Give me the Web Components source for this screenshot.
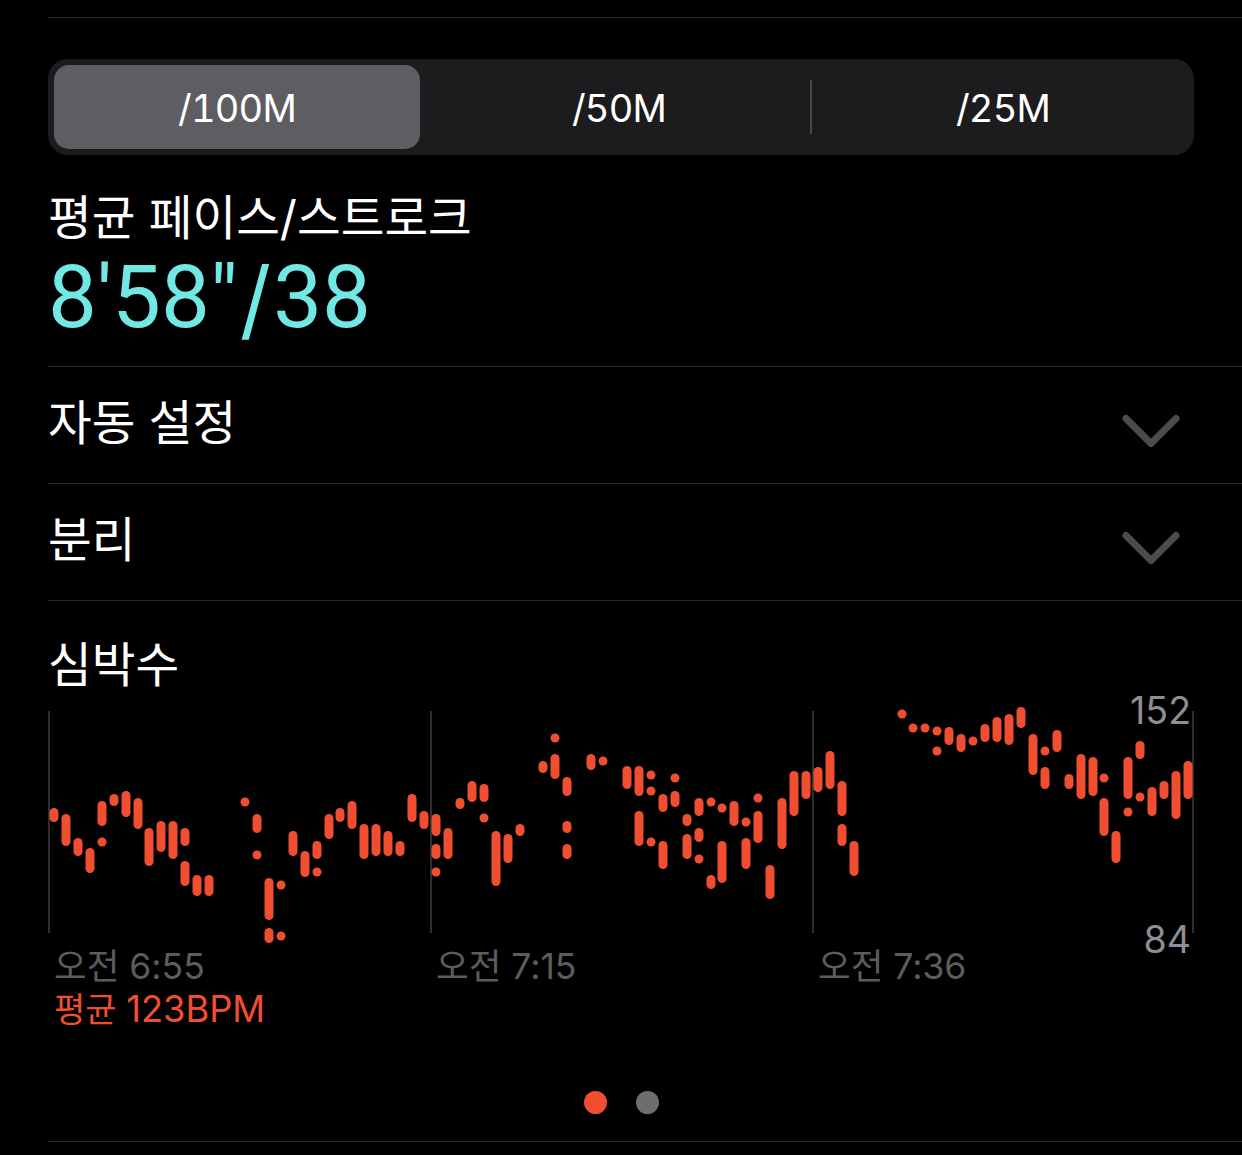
<!DOCTYPE html>
<html lang="ko">
<head>
<meta charset="utf-8">
<title>심박수</title>
<style>
  html, body { margin: 0; background: #000; }
  body { font-family: Inter, "Noto Sans CJK KR", sans-serif; color: #fff; width: 1242px; height: 1155px; overflow: hidden; }
  main { display: flex; flex-direction: column; padding: 17px 0 0 48px; }
</style>
</head>
<body>
<main>
  <seg-control></seg-control>
  <pace-metric label="평균 페이스/스트로크" value="8'58&quot;/38"></pace-metric>
  <fold-row>자동 설정</fold-row>
  <fold-row>분리</fold-row>
  <heart-chart></heart-chart>
  <page-dots></page-dots>
</main>
<script>
const sans = `Inter, "Noto Sans CJK KR", sans-serif`

class SegControl extends HTMLElement {
  constructor() {
    super()
    this.shadow = this.attachShadow({ mode: 'open' })
  }
  connectedCallback() {
    this.shadow.innerHTML = /*html*/`
      <style>
        :host { display: block; border-top: 1px solid #2a2a2c; padding-top: 41px; }
        .track {
          display: grid; grid-template-columns: 366px 8px 382px 2px 1fr;
          align-items: center; box-sizing: border-box;
          width: 1146px; height: 96px; padding: 6px 0 6px 6px;
          background: #1c1c1e; border-radius: 20px;
        }
        .seg {
          display: flex; align-items: center; justify-content: center; height: 84px;
          font: 400 38px ${sans}; font-feature-settings: "tnum"; letter-spacing: -.8px; padding-top: 1px; box-sizing: border-box;
        }
        .seg.on { background: #5e5e62; border-radius: 15px; }
        .sep { height: 54px; background: #48484a; }
      </style>
      <div class="track">
        <div class="seg on">/100M</div>
        <div></div>
        <div class="seg">/50M</div>
        <div class="sep"></div>
        <div class="seg">/25M</div>
      </div>`
  }
}

class PaceMetric extends HTMLElement {
  constructor() {
    super()
    this.shadow = this.attachShadow({ mode: 'open' })
  }
  connectedCallback() {
    const value = this.getAttribute('value').replace('/', '<span>/</span>')
    this.shadow.innerHTML = /*html*/`
      <style>
        :host { display: block; height: 211px; box-sizing: border-box; padding-top: 34px; }
        .label { font: 400 47.5px/58px ${sans}; height: 58px; }
        .value { font: 400 87px/88px Roboto, ${sans}; color: #72e8e4; margin-top: 6px; height: 88px; }
        .value span { font-family: Inter, sans-serif; vertical-align: -3px; margin: 0 2px 0 2px; }
      </style>
      <div class="label">${this.getAttribute('label')}</div>
      <div class="value">${value}</div>`
  }
}

class FoldRow extends HTMLElement {
  constructor() {
    super()
    this.shadow = this.attachShadow({ mode: 'open' })
  }
  connectedCallback() {
    this.shadow.innerHTML = /*html*/`
      <style>
        :host {
          display: flex; justify-content: space-between; box-sizing: border-box;
          height: 117px; border-top: 1px solid #2a2a2c; padding: 26px 62px 0 0;
          font: 400 47.5px/60px ${sans};
        }
        svg { width: 58px; height: 34px; margin-top: 21px; }
      </style>
      <span><slot></slot></span>
      <svg viewBox="0 0 58 34" fill="none" stroke="#4c4c50" stroke-width="7" stroke-linecap="round" stroke-linejoin="round">
        <path d="M4 4.5 L29 29.5 L54 4.5"/>
      </svg>`
  }
}

class HeartChart extends HTMLElement {
  constructor() {
    super()
    this.shadow = this.attachShadow({ mode: 'open' })

    // x: [y1, y2] is a bar, a single y is a dot
    this.data = [
      [54, [808,822]], [66, [814,846]], [78, [838,856]], [90, [848,873]],
      [102, [801,826], 842], [114, [794,806]], [126, [791,817]], [138, [798,829]],
      [149, [828,866]], [161, [821,852]], [173, [821,859]], [185, [828,846], [861,886]],
      [197, [875,896]], [209, [875,896]], [245, 802], [257, [814,833], 855],
      [269, [878,920], [928,943]], [281, 885, 936], [293, [831,856]], [305, [851,877]],
      [317, [841,859], 872], [329, [814,839]], [340, [808,822]], [352, [801,829]],
      [364, [824,859]], [376, [824,856]], [388, [831,856]], [400, [841,856]],
      [412, [794,822]], [424, [811,829]], [436, [814,836], [844,859], 872], [448, [828,859]],
      [460, [798,809]], [472, [781,802]], [484, [784,802], 818], [496, [831,886]],
      [508, [834,863]], [520, [824,836]], [543, [761,773]], [555, 738, [754,779]],
      [567, [777,796], [821,833], [844,859]], [591, [754,770]], [603, 761],
      [627, [766,789]], [639, [766,796], [811,846]], [651, 775, 791, 842],
      [663, [794,812], [841,869]], [675, 778, [791,807]], [687, [814,826], [834,859]],
      [699, [798,816], [828,842], 859], [711, 802, [875,889]], [722, 808, [841,883]],
      [734, [801,826]], [746, 822, [838,869]], [758, 798, [811,843]], [770, [865,899]],
      [782, [798,849]], [794, [771,816]], [806, [771,799]], [818, [767,792]],
      [830, [751,789]], [842, [781,816], [824,846]], [854, [841,876]],
      [902, 714], [913, 728], [925, 728], [937, 731, 751], [949, [727,745]],
      [961, [734,752]], [973, 741], [985, [724,742]], [997, [717,742]], [1009, [714,745]],
      [1021, [707,728]], [1033, [734,775]], [1045, 751, [767,789]], [1057, [730,752]],
      [1069, [774,789]], [1081, [754,799]], [1093, [757,796]], [1104, 778, [798,836]],
      [1116, [831,863]], [1128, [757,799], 812], [1140, [741,759], 797], [1152, [787,816]],
      [1164, [781,799]], [1176, [771,819]], [1188, [761,799]]
    ]
  }

  connectedCallback() {
    this.render()
  }

  marks() {
    // chart box starts at page x 48, y 700
    return this.data.map(([x, ...items]) => items.map(item => {
      const cx = x - 48
      if (Array.isArray(item)) {
        return `<rect x="${cx - 4.5}" y="${item[0] - 700}" width="9" height="${item[1] - item[0]}" rx="4.5"/>`
      }
      return `<circle cx="${cx}" cy="${item - 700}" r="4.5"/>`
    }).join('')).join('')
  }

  render() {
    this.shadow.innerHTML = /*html*/`
      <style>
        :host { display: block; position: relative; height: 541px; border-top: 1px solid #2a2a2c; box-sizing: border-box; }
        h2 { margin: 0; padding-top: 34px; height: 65px; font: 400 47.5px/60px ${sans}; }
        svg { display: block; width: 1146px; height: 245px; }
        .scale { position: absolute; right: 51px; font: 400 37.5px/44px ${sans}; color: #8e8e93; }
        .scale.top { top: 88px; }
        .scale.bottom { top: 317px; }
        .times { padding-left: 6px; display: grid; grid-template-columns: repeat(3, 382px); width: 1140px; font: 400 35.5px/44px ${sans}; color: #5c5c5e; height: 42px; }
        .avg { padding-left: 6px; font: 400 34px/44px ${sans}; color: #f04e30; }
        .avg b { font: 400 36.3px/44px ${sans}; }
      </style>
      <h2>심박수</h2>
      <svg viewBox="0 0 1146 245">
        <g fill="#2e2e30">
          <rect x="0" y="11" width="2" height="222"/>
          <rect x="382" y="11" width="2" height="222"/>
          <rect x="764" y="11" width="2" height="222"/>
          <rect x="1144" y="11" width="2" height="222"/>
        </g>
        <g fill="#ef4e30">${this.marks()}</g>
      </svg>
      <div class="scale top">152</div>
      <div class="scale bottom">84</div>
      <div class="times"><span>오전 6:55</span><span>오전 7:15</span><span>오전 7:36</span></div>
      <div class="avg">평균 <b>123BPM</b></div>`
  }
}

class PageDots extends HTMLElement {
  constructor() {
    super()
    this.shadow = this.attachShadow({ mode: 'open' })
  }
  connectedCallback() {
    this.shadow.innerHTML = /*html*/`
      <style>
        :host {
          display: flex; gap: 29px; justify-content: center; align-items: flex-start;
          position: relative; box-sizing: border-box; width: 1146px; height: 0;
        }
        i { display: block; width: 23px; height: 23px; border-radius: 50%; background: #6e6e70; margin-top: -50px; }
        i:first-of-type { background: #f04e30; }
        hr { position: absolute; left: 0; top: 0; width: 1194px; margin: 0; border: 0; border-top: 1px solid #2a2a2c; }
      </style>
      <i></i><i></i><hr>`
  }
}

customElements.define('seg-control', SegControl)
customElements.define('pace-metric', PaceMetric)
customElements.define('fold-row', FoldRow)
customElements.define('heart-chart', HeartChart)
customElements.define('page-dots', PageDots)
</script>
</body>
</html>
